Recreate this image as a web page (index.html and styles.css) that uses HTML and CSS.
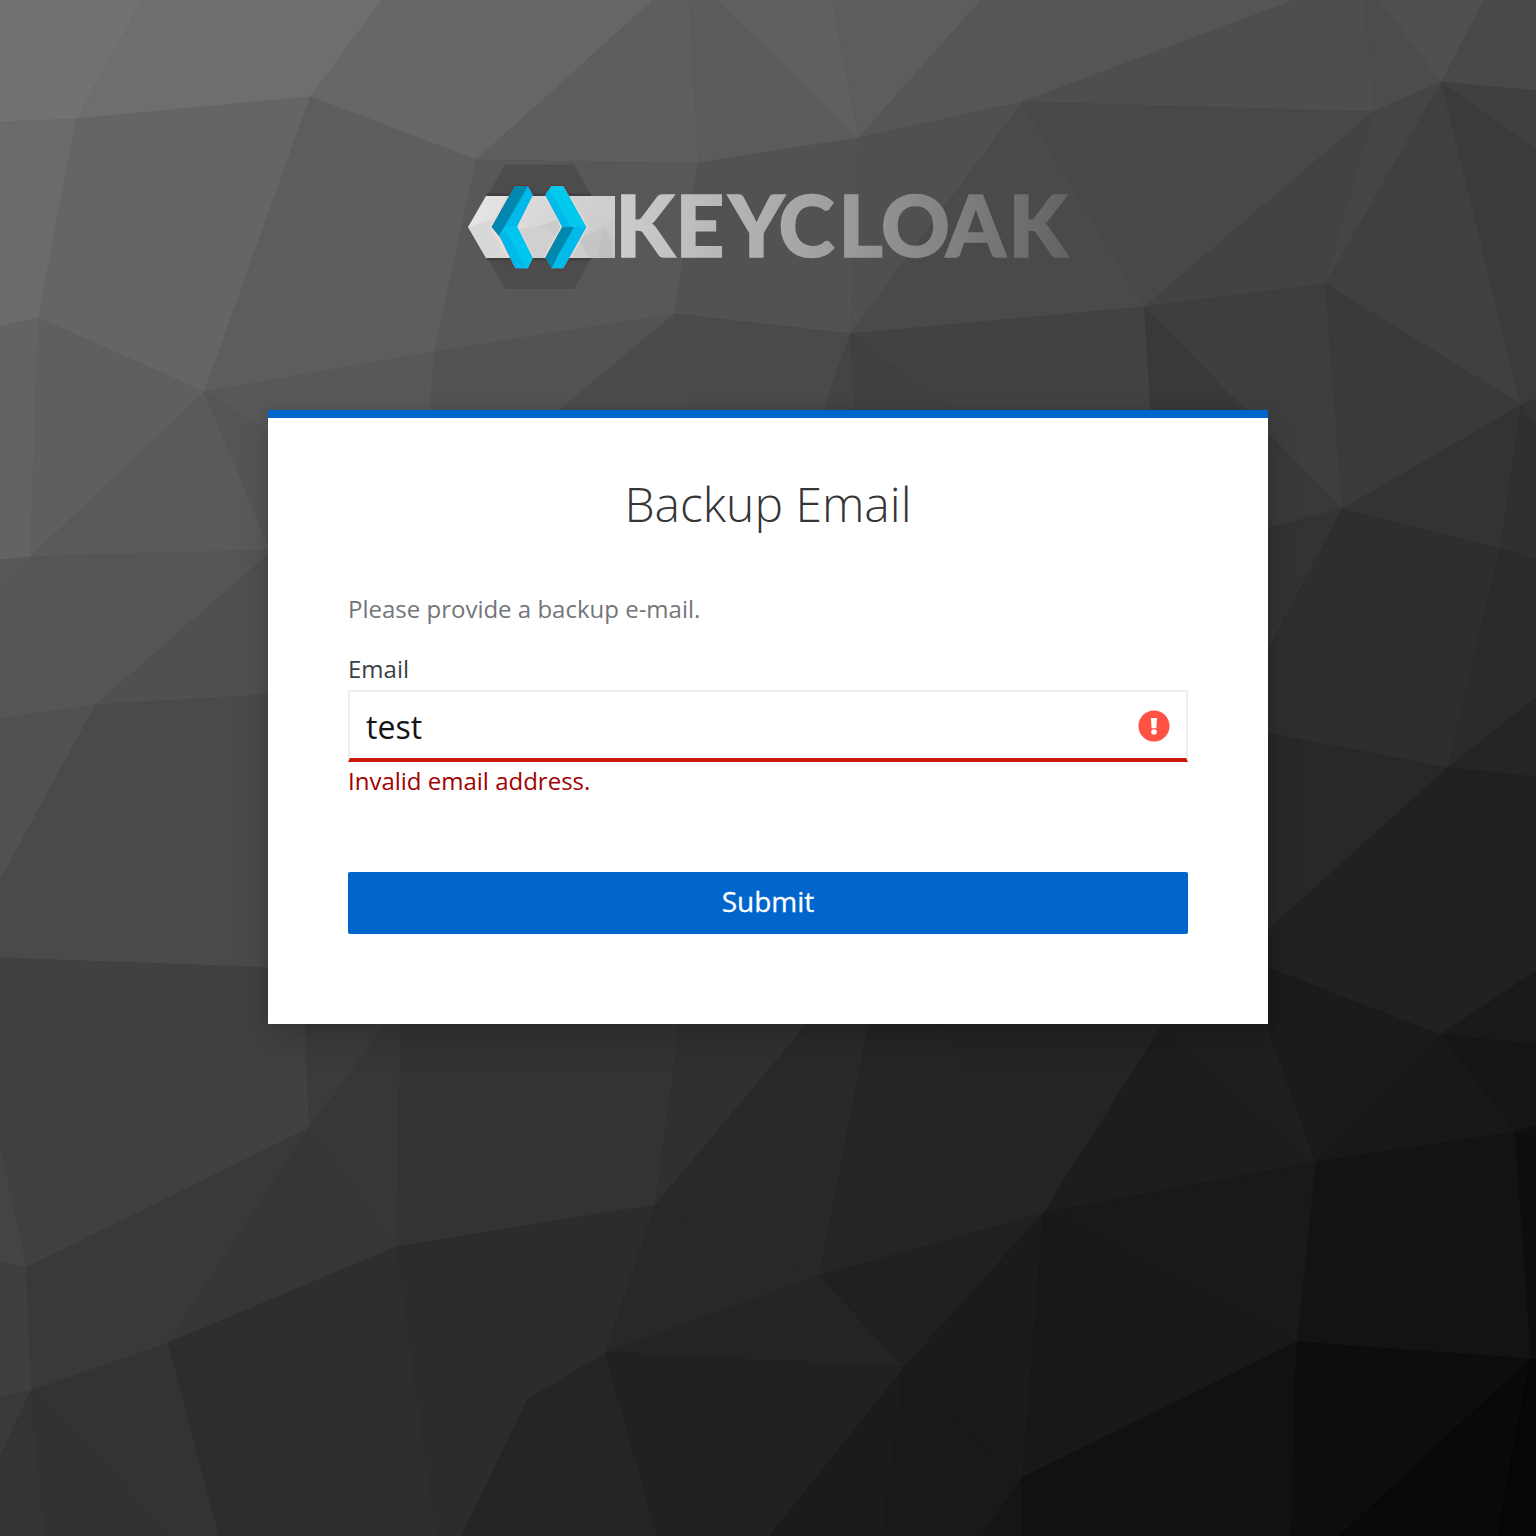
FILE: index.html
```html
<!DOCTYPE html>
<html lang="en">
<head>
<meta charset="utf-8">
<title>Backup Email</title>
<link rel="stylesheet" href="styles.css">
</head>
<body class="login">
<svg class="backdrop" viewBox="0 0 1536 1536" aria-hidden="true">
  <g stroke-width="1" transform="translate(0.500 1)">
  <path fill="#727272" stroke="#727272" d="M-2 -2H141V0L76 118L-2 121Z"/>
  <path fill="#6e6e6e" stroke="#6e6e6e" d="M141 -2H381V0L310 96L76 118L141 0Z"/>
  <path fill="#676767" stroke="#676767" d="M381 -2H445V0L476 159L310 96L381 0Z"/>
  <path fill="#666666" stroke="#666666" d="M445 -2H652V0L476 159L445 0Z"/>
  <path fill="#5e5e5e" stroke="#5e5e5e" d="M652 -2H689V0L698 162L476 159L652 0Z"/>
  <path fill="#5b5b5b" stroke="#5b5b5b" d="M689 -2H718V0L858 137L698 162L689 0Z"/>
  <path fill="#606060" stroke="#606060" d="M718 -2H832V0L858 137L718 0Z"/>
  <path fill="#5d5d5d" stroke="#5d5d5d" d="M832 -2H980V0L858 137L832 0Z"/>
  <path fill="#565656" stroke="#565656" d="M980 -2H1033V0L1022 101L858 137L980 0Z"/>
  <path fill="#555555" stroke="#555555" d="M1033 -2H1292V0L1022 101L1033 0Z"/>
  <path fill="#4e4e4e" stroke="#4e4e4e" d="M1292 -2H1364V0L1373 111L1022 101L1292 0Z"/>
  <path fill="#4c4c4c" stroke="#4c4c4c" d="M1364 -2H1380V0L1441 81L1373 111L1364 0Z"/>
  <path fill="#505050" stroke="#505050" d="M1380 -2H1483V0L1441 81L1380 0Z"/>
  <path fill="#494949" stroke="#494949" d="M1483 -2H1536V90L1441 81L1483 0Z"/>
  <path fill="#6b6b6b" stroke="#6b6b6b" d="M-2 121L76 118L38 317L-2 326Z"/>
  <path fill="#656565" stroke="#656565" d="M76 118L310 96L204 391L38 317Z"/>
  <path fill="#5d5d5d" stroke="#5d5d5d" d="M310 96L434 351L204 391Z"/>
  <path fill="#5e5e5e" stroke="#5e5e5e" d="M310 96L476 159L434 351Z"/>
  <path fill="#585858" stroke="#585858" d="M476 159L698 162L674 313L434 351Z"/>
  <path fill="#525252" stroke="#525252" d="M698 162L858 137L850 333L674 313Z"/>
  <path fill="#505050" stroke="#505050" d="M858 137L1022 101L850 333Z"/>
  <path fill="#4a4a4a" stroke="#4a4a4a" d="M1022 101L1144 306L850 333Z"/>
  <path fill="#484848" stroke="#484848" d="M1022 101L1373 111L1144 306Z"/>
  <path fill="#434343" stroke="#434343" d="M1373 111L1325 283L1144 306Z"/>
  <path fill="#454545" stroke="#454545" d="M1373 111L1441 81L1325 283Z"/>
  <path fill="#404040" stroke="#404040" d="M1441 81L1521 404L1325 283Z"/>
  <path fill="#3b3b3b" stroke="#3b3b3b" d="M1441 81L1536 148V398L1521 404Z"/>
  <path fill="#404040" stroke="#404040" d="M1441 81L1536 90V148Z"/>
  <path fill="#636363" stroke="#636363" d="M-2 326L38 317L30 556L-2 559Z"/>
  <path fill="#5f5f5f" stroke="#5f5f5f" d="M38 317L204 391L30 556Z"/>
  <path fill="#5a5a5a" stroke="#5a5a5a" d="M204 391L270 549L30 556Z"/>
  <path fill="#555555" stroke="#555555" d="M204 391L300 450V549H270Z"/>
  <path fill="#585858" stroke="#585858" d="M204 391L434 351L427 450H300Z"/>
  <path fill="#535353" stroke="#535353" d="M434 351L674 313L510 450H427Z"/>
  <path fill="#4b4b4b" stroke="#4b4b4b" d="M674 313L700 450H510Z"/>
  <path fill="#4a4a4a" stroke="#4a4a4a" d="M674 313L850 333L808 450H700Z"/>
  <path fill="#444444" stroke="#444444" d="M850 333L856 450H808Z"/>
  <path fill="#404040" stroke="#404040" d="M850 333L1010 450H856Z"/>
  <path fill="#424242" stroke="#424242" d="M850 333L1144 306L1153 450H1010Z"/>
  <path fill="#393939" stroke="#393939" d="M1144 306L1342 508L1260 529L1153 450Z"/>
  <path fill="#3e3e3e" stroke="#3e3e3e" d="M1144 306L1325 283L1342 508Z"/>
  <path fill="#3a3a3a" stroke="#3a3a3a" d="M1325 283L1521 404L1342 508Z"/>
  <path fill="#333333" stroke="#333333" d="M1521 404L1500 548L1342 508Z"/>
  <path fill="#303030" stroke="#303030" d="M1521 404L1536 424V559L1500 548Z"/>
  <path fill="#343434" stroke="#343434" d="M1536 398V424L1521 404Z"/>
  <path fill="#333333" stroke="#333333" d="M1342 508L1260 664V529Z"/>
  <path fill="#2e2e2e" stroke="#2e2e2e" d="M1342 508L1500 548L1447 767L1260 731V664Z"/>
  <path fill="#2b2b2b" stroke="#2b2b2b" d="M1500 548L1536 559V696L1447 767Z"/>
  <path fill="#252525" stroke="#252525" d="M1447 767L1536 696V776Z"/>
  <path fill="#282828" stroke="#282828" d="M1260 731L1447 767L1260 936Z"/>
  <path fill="#212121" stroke="#212121" d="M1447 767L1440 1034L1260 964V936Z"/>
  <path fill="#202020" stroke="#202020" d="M1447 767L1536 776V970L1440 1034Z"/>
  <path fill="#585858" stroke="#585858" d="M-2 559L30 556L-2 593Z"/>
  <path fill="#565656" stroke="#565656" d="M-2 593L30 556L95 704L-2 718Z"/>
  <path fill="#555555" stroke="#555555" d="M30 556L270 549V552L95 704Z"/>
  <path fill="#505050" stroke="#505050" d="M280 544V693L95 704Z"/>
  <path fill="#515151" stroke="#515151" d="M-2 718L95 704L-2 883Z"/>
  <path fill="#4a4a4a" stroke="#4a4a4a" d="M95 704L280 693V967L-2 957V883Z"/>
  <path fill="#404040" stroke="#404040" d="M-2 957V973L309 1127L26 1267L-2 1140Z"/>
  <path fill="#414141" stroke="#414141" d="M-2 957L303 968L309 1127L-2 973Z"/>
  <path fill="#444444" stroke="#444444" d="M-2 1140L26 1267L-2 1260Z"/>
  <path fill="#3f3f3f" stroke="#3f3f3f" d="M-2 1260L26 1267L31 1390L-2 1396Z"/>
  <path fill="#393939" stroke="#393939" d="M-2 1396L31 1390L-2 1459Z"/>
  <path fill="#393939" stroke="#393939" d="M26 1267L309 1127L168 1342L31 1390Z"/>
  <path fill="#363636" stroke="#363636" d="M309 1127L396 1246L168 1342Z"/>
  <path fill="#3b3b3b" stroke="#3b3b3b" d="M304 1000H403L309 1127Z"/>
  <path fill="#373737" stroke="#373737" d="M403 1000L401 1024L396 1246L309 1127Z"/>
  <path fill="#333333" stroke="#333333" d="M401 1000H682L655 1204L396 1246Z"/>
  <path fill="#303030" stroke="#303030" d="M682 1000H826L655 1204Z"/>
  <path fill="#292929" stroke="#292929" d="M826 1000H873L819 1275L655 1204Z"/>
  <path fill="#252525" stroke="#252525" d="M873 1000H930L1043 1212L819 1275Z"/>
  <path fill="#242424" stroke="#242424" d="M930 1000H1177L1043 1212Z"/>
  <path fill="#343434" stroke="#343434" d="M-2 1459L31 1390L45 1536H-2Z"/>
  <path fill="#323232" stroke="#323232" d="M31 1390L175 1536H45Z"/>
  <path fill="#333333" stroke="#333333" d="M31 1390L168 1342L219 1536H175Z"/>
  <path fill="#2d2d2d" stroke="#2d2d2d" d="M168 1342L390 1536H219Z"/>
  <path fill="#2e2e2e" stroke="#2e2e2e" d="M168 1342L396 1246L436 1536H390Z"/>
  <path fill="#2c2c2c" stroke="#2c2c2c" d="M396 1246L655 1204L605 1352L527 1399L461 1536H436Z"/>
  <path fill="#282828" stroke="#282828" d="M655 1204L819 1275L605 1352Z"/>
  <path fill="#242424" stroke="#242424" d="M819 1275L904 1366L605 1352Z"/>
  <path fill="#252525" stroke="#252525" d="M605 1352L657 1536H461L527 1399Z"/>
  <path fill="#212121" stroke="#212121" d="M605 1352L904 1366L768 1536H657Z"/>
  <path fill="#202020" stroke="#202020" d="M819 1275L1043 1212L904 1366Z"/>
  <path fill="#1b1b1b" stroke="#1b1b1b" d="M904 1366L1043 1212L1022 1477Z"/>
  <path fill="#1b1b1b" stroke="#1b1b1b" d="M904 1366L881 1536H768Z"/>
  <path fill="#191919" stroke="#191919" d="M904 1366L1022 1477L981 1536H881Z"/>
  <path fill="#151515" stroke="#151515" d="M1022 1477V1536H981Z"/>
  <path fill="#1d1d1d" stroke="#1d1d1d" d="M1177 1000L1160 1026L1315 1161L1043 1212Z"/>
  <path fill="#1f1f1f" stroke="#1f1f1f" d="M1177 1000H1258L1315 1161L1160 1026Z"/>
  <path fill="#1b1b1b" stroke="#1b1b1b" d="M1260 964L1440 1034L1315 1161L1258 1000Z"/>
  <path fill="#191919" stroke="#191919" d="M1440 1034L1536 970V1044Z"/>
  <path fill="#151515" stroke="#151515" d="M1440 1034L1536 1044V1124L1514 1131Z"/>
  <path fill="#181818" stroke="#181818" d="M1440 1034L1514 1131L1315 1161Z"/>
  <path fill="#101010" stroke="#101010" d="M1514 1131L1536 1124V1138Z"/>
  <path fill="#0d0d0d" stroke="#0d0d0d" d="M1514 1131L1536 1138V1358H1530Z"/>
  <path fill="#131313" stroke="#131313" d="M1315 1161L1514 1131L1530 1358L1296 1341Z"/>
  <path fill="#191919" stroke="#191919" d="M1043 1212L1315 1161L1296 1341Z"/>
  <path fill="#181818" stroke="#181818" d="M1043 1212L1296 1341L1022 1477Z"/>
  <path fill="#111111" stroke="#111111" d="M1022 1477L1296 1341L1291 1536H1022Z"/>
  <path fill="#0d0d0d" stroke="#0d0d0d" d="M1296 1341L1530 1358L1338 1536H1291Z"/>
  <path fill="#090909" stroke="#090909" d="M1530 1358L1497 1536H1338Z"/>
  <path fill="#060606" stroke="#060606" d="M1530 1358H1536V1536H1497Z"/>
  </g>
</svg>
<div class="page">
  <header class="brand">
    <svg class="logo" viewBox="450 150 636 150" role="img" aria-label="Keycloak">
      <defs>
        <linearGradient id="word" gradientUnits="userSpaceOnUse" x1="620" y1="0" x2="1068" y2="0">
          <stop offset="0" stop-color="#cdcdcd"/>
          <stop offset=".35" stop-color="#ababab"/>
          <stop offset=".65" stop-color="#8b8b8b"/>
          <stop offset="1" stop-color="#636363"/>
        </linearGradient>
        <linearGradient id="bar" gradientUnits="userSpaceOnUse" x1="480" y1="196" x2="615" y2="258">
          <stop offset="0" stop-color="#e5e5e5"/>
          <stop offset="1" stop-color="#c6c6c6"/>
        </linearGradient>
        <clipPath id="bar-clip"><path d="M468 227L486 196H615V258H486Z"/></clipPath>
      </defs>
      <path fill="#4c4c4c" d="M505 164.500H574L609 227L574 289H505L470 227Z"/>
      <path fill="#404040" d="M487 193.500H591V196H487ZM487 258H591V260.500H487Z"/>
      <path fill="url(#bar)" d="M468 227L486 196H615V258H486Z"/>
      <g clip-path="url(#bar-clip)">
        <path fill="#d8d8d8" d="M468 227L491 220L510 258H486Z"/>
        <path fill="#d0d0d0" d="M517 230L541 226L562 218V258H533Z"/>
        <path fill="#cbcbcb" d="M541 226L562 218V240Z"/>
        <path fill="#c5c5c5" d="M578 240L605 227L615 240V258H590Z"/>
        <path fill="#cecece" d="M590 196L605 227L615 215V196Z"/>
        <path fill="#c0c0c0" d="M605 227L615 258H596Z"/>
      </g>
      <path fill="none" stroke="#69372e" stroke-width="2" d="M509 195L514.500 186H528L533 195M509 259L515 268.500H528L533 259M545 195L551 186H563.500L569 195M545 259L551 268.500H563.500L569 259"/>
      <g clip-path="url(#bar-clip)" fill="none" stroke="#f5d9d3" stroke-width="2.600">
        <path d="M491.500 227L514.500 186H528L533 195L517 227L533 258L528 268.500H515ZM545 195L551 186H563.500L586.500 227L563.500 268.500H551L545 258L562 227Z"/>
      </g>
      <path fill="#00b9ea" d="M527 186H528L533 195L517 227L506 227L499 236L515 205Z"/>
      <path fill="#00c5ee" d="M506 226H517L533 258L528 268.500H523L499 236Z"/>
      <path fill="#00b9ea" d="M499 235L506 231L526 268.500H515Z"/>
      <path fill="#0088ae" d="M491.500 227L514.500 186H528L499 236Z"/>
      <path fill="#00c9ee" d="M551 186H563.500L586.500 227H573L548 191Z"/>
      <path fill="#00baea" d="M545 195L548 190L573 227H562Z"/>
      <path fill="#00baea" d="M573 227H586.500L563.500 268.500H551Z"/>
      <path fill="#0089ae" d="M562 227H574L551 268L545 258Z"/>
      <text class="wordmark" y="257.300" x="615.500 675.500 728.500 778.500 838.500 881 946 1008.500" fill="url(#word)" stroke="url(#word)">KEYCLOAK</text>
    </svg>
  </header>
  <main class="card">
    <h1 class="card-title">Backup Email</h1>
    <form class="form">
      <p class="form-intro">Please provide a backup e-mail.</p>
      <label class="form-label" for="email">Email</label>
      <div class="field">
        <input class="field-input" id="email" type="text" value="test" spellcheck="false">
        <svg class="field-icon" viewBox="0 0 32 32" aria-hidden="true">
          <circle cx="16" cy="16" r="15.500" fill="#ff5243"/>
          <path fill="#fff" d="M13 8H19L18.400 18.200H13.600Z"/>
          <circle cx="16" cy="22" r="2.800" fill="#fff"/>
        </svg>
      </div>
      <span class="form-error">Invalid email address.</span>
      <button class="submit" type="button">Submit</button>
    </form>
  </main>
</div>
</body>
</html>
```
FILE: styles.css
```css
* {
  box-sizing: border-box;
}

.login {
  margin: 0;
  background: #222;
  font-family: "Open Sans", sans-serif;
  font-size: 24px;
  line-height: 36px;
}

.backdrop {
  position: absolute;
  inset: 0;
  z-index: -1;
  width: 1536px;
  height: 1536px;
}

.page {
  display: flex;
  flex-direction: column;
  align-items: center;
  height: 1536px;
  padding-top: 150px;
}

.brand {
  width: 636px;
  height: 260px;
}

.logo {
  display: block;
  width: 636px;
  height: 150px;
}

.wordmark {
  font-family: Lato, sans-serif;
  font-size: 85px;
  font-weight: 900;
  stroke-width: 1.6px;
}

.card {
  width: 1000px;
  height: 614px;
  padding: 55px 80px 0;
  border-top: 8px solid #06c;
  background: #fff;
  box-shadow: 0 16px 32px rgba(3, 3, 3, .16), 0 0 12px rgba(3, 3, 3, .08);
}

.card-title {
  margin: 0;
  color: #363636;
  font-size: 48px;
  font-weight: 300;
  line-height: 62px;
  text-align: center;
}

.form {
  display: flex;
  flex-direction: column;
  padding-top: 56px;
}

.form-intro {
  margin: 0 0 24px;
  color: #72767b;
}

.form-label {
  padding-bottom: 3px;
  color: #393f44;
}

.field {
  display: flex;
  align-items: center;
  height: 72px;
  padding-right: 16px;
  border: 2px solid #ededed;
  border-bottom: 4px solid #c9190b;
}

.field-input {
  flex: 1;
  min-width: 0;
  height: 66px;
  padding: 2px 16px 0;
  border: 0;
  outline: 0;
  background: none;
  color: #151515;
  font-family: inherit;
  font-size: 32px;
}

.field-icon {
  width: 32px;
  height: 32px;
  margin-top: 2px;
}

.form-error {
  margin-top: 1px;
  color: #a30000;
}

.submit {
  height: 62px;
  margin-top: 73px;
  padding: 0 0 4px;
  border: 0;
  border-radius: 2px;
  background: #06c;
  color: #fff;
  font-family: inherit;
  font-size: 28px;
  line-height: 42px;
  -webkit-text-stroke: .3px #fff;
}
```
